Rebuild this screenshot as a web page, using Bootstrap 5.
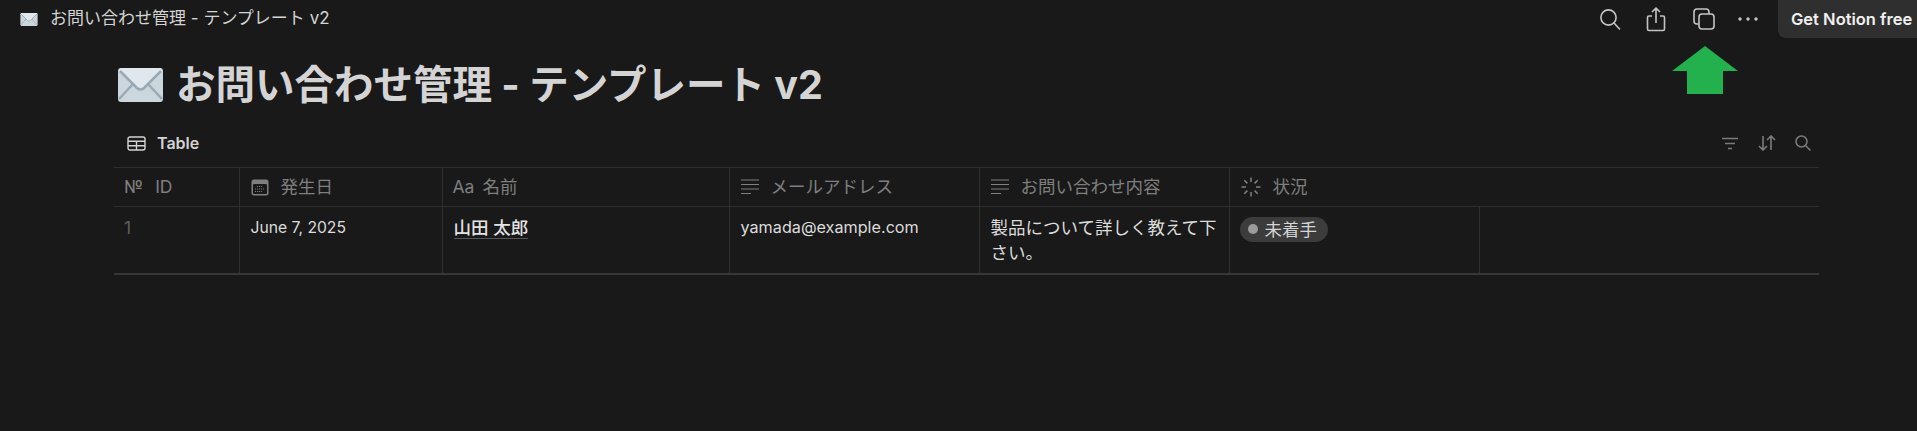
<!DOCTYPE html>
<html lang="ja">
<head>
    <meta charset="UTF-8">
    <title>お問い合わせ管理 - テンプレート v2</title>
    <link href="https://cdn.jsdelivr.net/npm/bootstrap@5.3.0/dist/css/bootstrap.min.css" rel="stylesheet">
    <style>
        body {
            background: #191919;
            color: #d4d4d4;
            font-family: Inter, "Noto Sans CJK JP", sans-serif;
            font-size: 17.5px;
            height: 431px;
            overflow: hidden;
            position: relative;
        }
        .top-bar { height: 38px; padding-left: 20px; }
        .top-title { margin-left: 12px; font-size: 17px; color: #d4d4d4; }
        .top-icon { width: 46px; height: 38px; color: #c4c4c4; }
        .top-icon-copy { padding-left: 4px; }
        .get-free {
            width: 139px;
            height: 38px;
            margin-left: 7px;
            padding-left: 13px;
            background: #2f2f2f;
            border-bottom-left-radius: 8px;
            color: #f0f0f0;
            font-weight: 600;
            font-size: 16.5px;
            line-height: 38px;
            white-space: nowrap;
        }
        .page-body { padding: 0 98px 0 114px; }
        .page-title {
            margin: 22px 0 0 4px;
            height: 50px;
            font-size: 39.5px;
            font-weight: 700;
            line-height: 50px;
            gap: 13px;
            color: #d4d4d4;
        }
        .view-bar { height: 57px; padding: 9px 8px 0 13px; }
        .view-name { margin-left: 11px; font-size: 16px; font-weight: 600; color: #d4d4d4; }
        .view-tools { gap: 19px; color: #7c7c7c; }
        .db-table {
            --bs-table-bg: transparent;
            --bs-table-color: #dcdcdc;
            table-layout: fixed;
            width: 1705px;
            margin: 0;
            border-top: 1px solid #2f2f2f;
            border-bottom: 2px solid #373737;
        }
        .db-table th {
            height: 39px;
            padding: 0 11px;
            font-weight: 400;
            font-size: 17.5px;
            color: #7f7f7f;
            border-bottom: 1px solid #2f2f2f;
            border-right: 1px solid #2f2f2f;
            vertical-align: middle;
            white-space: nowrap;
        }
        .db-table td {
            height: 67px;
            padding: 8px 11px 0;
            line-height: 25px;
            font-size: 17.5px;
            border-bottom: 0;
            border-right: 1px solid #2f2f2f;
            vertical-align: top;
        }
        .db-table th:last-child, .db-table td:last-child { border-right: 0; }
        .head-cell { gap: 12px; }
        .head-id { margin-left: -1px; }
        .head-name { margin-left: -1px; gap: 8px; }
        .id-cell { color: #5f5f5f !important; padding-left: 10px !important; }
        .name-cell { font-weight: 500; color: #e4e4e4 !important; }
        .name-cell span { border-bottom: 1px solid #555; }
        .date-cell { font-size: 15.7px !important; }
        .email-cell { font-size: 16.2px !important; }
        .status-pill {
            display: inline-flex;
            align-items: center;
            gap: 7px;
            height: 25px;
            padding: 0 11px 0 8px;
            margin-left: -1px;
            background: #3c3c3c;
            border-radius: 13px;
            font-size: 17.5px;
            color: #d4d4d4;
        }
        .status-dot { width: 10px; height: 10px; border-radius: 50%; background: #9b9b9b; }
        .green-arrow { position: absolute; left: 1672px; top: 46px; }
    </style>
</head>
<body>
    <!-- top bar -->
    <div class="top-bar d-flex align-items-center justify-content-between">
        <div class="d-flex align-items-center">
            <svg width="18" height="13" viewBox="0 0 45 34">
                <rect width="45" height="34" rx="3" fill="#ccd6dd"/>
                <path d="M1 3 L19 21 Q22.5 24 26 21 L44 3 Q44 0 41 0 H4 Q1 0 1 3Z" fill="#e1e8ed"/>
                <path d="M1 31 L15 16 M44 31 L30 16 M2 3 L19 20 Q22.5 23 26 20 L43 3" fill="none" stroke="#99aab5" stroke-width="2.5"/>
            </svg>
            <span class="top-title">お問い合わせ管理 - テンプレート v2</span>
        </div>
        <div class="d-flex align-items-center">
            <div class="top-icon d-flex align-items-center justify-content-center">
                <svg width="22" height="23" viewBox="0 0 22 23" fill="none" stroke="currentColor" stroke-width="1.6"><circle cx="9.5" cy="9.5" r="7.6"/><path d="M15 15 L21 21.5"/></svg>
            </div>
            <div class="top-icon d-flex align-items-center justify-content-center">
                <svg width="20" height="25" viewBox="0 0 20 25" fill="none" stroke="currentColor" stroke-width="1.6"><path d="M6 9 H3 Q1.5 9 1.5 10.5 V22 Q1.5 23.5 3 23.5 H17 Q18.5 23.5 18.5 22 V10.5 Q18.5 9 17 9 H14"/><path d="M10 16 V1.5 M6 5 L10 1.2 L14 5"/></svg>
            </div>
            <div class="top-icon top-icon-copy d-flex align-items-center justify-content-center">
                <svg width="22" height="22" viewBox="0 0 22 22" fill="none" stroke="currentColor" stroke-width="1.6"><rect x="6" y="6" width="15" height="15" rx="3"/><path d="M6 16 H4 Q1 16 1 13 V4 Q1 1 4 1 H13 Q16 1 16 4 V6"/></svg>
            </div>
            <div class="top-icon d-flex align-items-center justify-content-center">
                <svg width="20" height="4" viewBox="0 0 20 4" fill="currentColor"><circle cx="2" cy="2" r="1.7"/><circle cx="10" cy="2" r="1.7"/><circle cx="18" cy="2" r="1.7"/></svg>
            </div>
            <div class="get-free">Get Notion free</div>
        </div>
    </div>

    <div class="page-body">
        <h1 class="page-title d-flex align-items-center">
            <svg width="45" height="34" viewBox="0 0 45 34">
                <rect width="45" height="34" rx="3" fill="#ccd6dd"/>
                <path d="M1 3 L19 21 Q22.5 24 26 21 L44 3 Q44 0 41 0 H4 Q1 0 1 3Z" fill="#e1e8ed"/>
                <path d="M1 31 L15 16 M44 31 L30 16 M2 3 L19 20 Q22.5 23 26 20 L43 3" fill="none" stroke="#99aab5" stroke-width="2.5"/>
            </svg>
            <span>お問い合わせ管理 - テンプレート v2</span>
        </h1>

        <div class="view-bar d-flex align-items-center justify-content-between">
            <div class="d-flex align-items-center">
                <svg width="19" height="15" viewBox="0 0 19 15" fill="none" stroke="#d4d4d4" stroke-width="1.4"><rect x="1" y="1" width="17" height="13" rx="2"/><path d="M1 5.3 H18 M1 9.7 H18 M9.5 5.3 V14"/></svg>
                <span class="view-name">Table</span>
            </div>
            <div class="view-tools d-flex align-items-center">
                <svg width="18" height="13" viewBox="0 0 18 13" fill="none" stroke="currentColor" stroke-width="1.6"><path d="M1 1.5 H17 M4 6.5 H14 M7 11.5 H11"/></svg>
                <svg width="18" height="16" viewBox="0 0 18 16" fill="none" stroke="currentColor" stroke-width="1.6"><path d="M5 1 V15 M1 11 L5 15 L9 11 M13 15 V1 M9 5 L13 1 L17 5"/></svg>
                <svg width="16" height="16" viewBox="0 0 16 16" fill="none" stroke="currentColor" stroke-width="1.5"><circle cx="6.5" cy="6.5" r="5.5"/><path d="M10.5 10.5 L15.5 15.5"/></svg>
            </div>
        </div>

        <table class="table db-table">
            <colgroup>
                <col style="width:125px"><col style="width:203px"><col style="width:287px"><col style="width:250px"><col style="width:250px"><col style="width:250px"><col>
            </colgroup>
            <thead>
                <tr>
                    <th><div class="head-cell head-id d-flex align-items-center"><span>№</span><span>ID</span></div></th>
                    <th>
                        <div class="head-cell d-flex align-items-center">
                            <svg width="18" height="17" viewBox="0 0 18 17"><rect x="0.5" y="0.5" width="17" height="16" rx="2.5" fill="#7f7f7f"/><rect x="2" y="5" width="14" height="10" rx="1" fill="#191919"/><path d="M6 7.5 H12 M4 10 H14 M4 12.5 H11" stroke="#7f7f7f" stroke-width="1" stroke-dasharray="1 1"/></svg>
                            <span>発生日</span>
                        </div>
                    </th>
                    <th><div class="head-cell head-name d-flex align-items-center"><span>Aa</span><span>名前</span></div></th>
                    <th>
                        <div class="head-cell d-flex align-items-center">
                            <svg width="18" height="16" viewBox="0 0 18 16" stroke="#7f7f7f" stroke-width="1.2"><path d="M0 1 H18 M0 5.5 H18 M0 10 H18 M0 14.5 H10"/></svg>
                            <span>メールアドレス</span>
                        </div>
                    </th>
                    <th>
                        <div class="head-cell d-flex align-items-center">
                            <svg width="18" height="16" viewBox="0 0 18 16" stroke="#7f7f7f" stroke-width="1.2"><path d="M0 1 H18 M0 5.5 H18 M0 10 H18 M0 14.5 H10"/></svg>
                            <span>お問い合わせ内容</span>
                        </div>
                    </th>
                    <th colspan="2">
                        <div class="head-cell d-flex align-items-center">
                            <svg width="20" height="20" viewBox="0 0 20 20" fill="none" stroke="#7f7f7f" stroke-width="1.5"><path d="M10 0.5 V5 M10 15 V19.5 M0.5 10 H5 M15 10 H19.5 M3.3 3.3 L6.4 6.4 M13.6 13.6 L16.7 16.7 M16.7 3.3 L13.6 6.4 M6.4 13.6 L3.3 16.7"/></svg>
                            <span>状況</span>
                        </div>
                    </th>
                </tr>
            </thead>
            <tbody>
                <tr>
                    <td class="id-cell">1</td>
                    <td class="date-cell">June 7, 2025</td>
                    <td class="name-cell"><span>山田 太郎</span></td>
                    <td class="email-cell">yamada@example.com</td>
                    <td>製品について詳しく教えて下さい。</td>
                    <td><span class="status-pill"><span class="status-dot"></span>未着手</span></td>
                    <td></td>
                </tr>
            </tbody>
        </table>
    </div>

    <!-- annotation drawn over the screenshot -->
    <svg class="green-arrow" width="66" height="48" viewBox="0 0 66 48"><path d="M33 0 L66 25 H51 V48 H15 V25 H0 Z" fill="#22b14c"/></svg>

    <script src="https://cdn.jsdelivr.net/npm/bootstrap@5.3.0/dist/js/bootstrap.bundle.min.js"></script>
</body>
</html>
